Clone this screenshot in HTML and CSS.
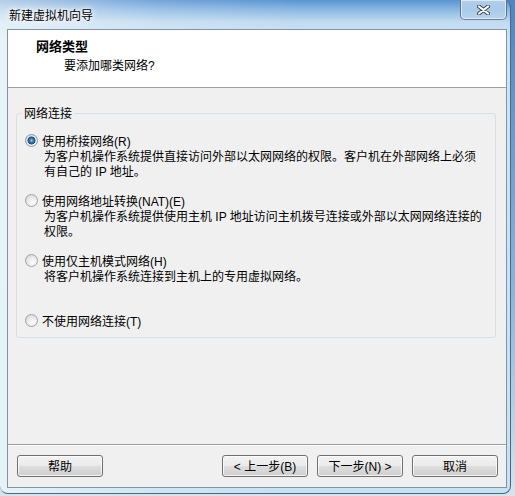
FILE: index.html
```html
<!DOCTYPE html>
<html lang="zh-CN">
<head>
<meta charset="utf-8">
<title>新建虚拟机向导</title>
<link rel="stylesheet" href="styles.css">
</head>
<body>
<div class="window">
  <div class="titlebar">
    <span class="title">新建虚拟机向导</span>
    <div class="close">
      <svg width="13" height="10" viewBox="0 0 13 10">
        <path d="M2 1.5 L11 8.5 M11 1.5 L2 8.5" stroke="#3c4652" stroke-width="4" stroke-linecap="round" fill="none"/>
        <path d="M2 1.5 L11 8.5 M11 1.5 L2 8.5" stroke="#ffffff" stroke-width="2.2" stroke-linecap="round" fill="none"/>
      </svg>
    </div>
  </div>
  <div class="client">
    <div class="header">
      <div class="h-title">网络类型</div>
      <div class="h-sub">要添加哪类网络?</div>
    </div>
    <div class="body">
      <fieldset class="group">
        <legend>网络连接</legend>
        <div class="option">
          <div class="opt-row"><span class="radio checked"></span><span class="label">使用桥接网络(R)</span></div>
          <div class="desc">为客户机操作系统提供直接访问外部以太网网络的权限。客户机在外部网络上必须<br>有自己的 IP 地址。</div>
        </div>
        <div class="option">
          <div class="opt-row"><span class="radio"></span><span class="label">使用网络地址转换(NAT)(E)</span></div>
          <div class="desc">为客户机操作系统提供使用主机 IP 地址访问主机拨号连接或外部以太网网络连接的<br>权限。</div>
        </div>
        <div class="option">
          <div class="opt-row"><span class="radio"></span><span class="label">使用仅主机模式网络(H)</span></div>
          <div class="desc">将客户机操作系统连接到主机上的专用虚拟网络。</div>
        </div>
        <div class="option last">
          <div class="opt-row"><span class="radio"></span><span class="label">不使用网络连接(T)</span></div>
        </div>
      </fieldset>
    </div>
    <div class="sep"></div>
    <div class="buttons">
      <button class="btn">帮助</button>
      <button class="btn back">&lt; 上一步(B)</button>
      <button class="btn">下一步(N) &gt;</button>
      <button class="btn">取消</button>
    </div>
  </div>
</div>
</body>
</html>
```
FILE: styles.css
```css
* { box-sizing: border-box; }
html, body { margin: 0; padding: 0; }
body {
  width: 515px;
  height: 496px;
  overflow: hidden;
  background: linear-gradient(180deg, #4f86bf 0%, #8fb6da 60%, #d9e3ea 100%);
  font-family: "Liberation Sans", "Noto Sans CJK SC", sans-serif;
  font-size: 12px;
  color: #000;
}
.window {
  width: 511px;
  height: 494px;
  display: flex;
  flex-direction: column;
  padding: 0 3px 5px 7px;
  border-right: 1px solid #4a6784;
  border-bottom: 1px solid #4a6784;
  border-radius: 0 8px 8px 8px;
  background:
    linear-gradient(90deg, rgba(255,255,255,0.55) 0px, rgba(255,255,255,0.15) 160px, rgba(255,255,255,0) 300px),
    linear-gradient(180deg, #5a94d1 0px, #8cb9e2 10px, #c1dbf0 22px, #cde4f3 40px, #c7e2f0 100%);
}
.titlebar {
  height: 29px;
  display: flex;
  align-items: flex-start;
  flex: none;
}
.title {
  margin: 8px 0 0 2px;
  line-height: 16px;
  text-shadow: 0 0 6px #fff, 0 0 3px #fff, 0 0 10px rgba(255,255,255,0.9);
}
.close {
  margin-left: auto;
  width: 47px;
  height: 20px;
  border: 1px solid rgba(50,70,100,0.65);
  border-top: none;
  border-radius: 0 0 5px 5px;
  background: linear-gradient(180deg, rgba(255,255,255,0.55) 0%, rgba(230,240,250,0.35) 50%, rgba(190,215,238,0.35) 100%);
  box-shadow: inset 0 0 0 1px rgba(255,255,255,0.55);
  display: flex;
  align-items: center;
  justify-content: center;
}
.client {
  width: 500px;
  height: 459px;
  border: 1px solid #7f94a9;
  background: #f0f0f0;
  display: flex;
  flex-direction: column;
}
.header {
  height: 58px;
  flex: none;
  background: #fff;
  border-bottom: 1px solid #a0a0a0;
  padding: 9px 0 0 28px;
}
.h-title {
  font-weight: bold;
  font-size: 13px;
  line-height: 16px;
}
.h-sub {
  margin: 3px 0 0 28px;
  line-height: 16px;
}
.body {
  flex: 1;
  padding: 17px 0 0 8px;
}
.group {
  margin: 0;
  width: 480px;
  min-width: 0;
  border: 1px solid #d5dfe5;
  border-radius: 3px;
  padding: 11px 0 9px 0;
}
.group legend {
  margin-left: 5px;
  padding: 2px 2px 0;
  line-height: 15px;
}
.option {
  height: 60px;
  padding-left: 8px;
}
.option.last { height: auto; }
.opt-row {
  display: flex;
  align-items: flex-start;
  gap: 4px;
  height: 15px;
}
.radio {
  flex: none;
  width: 13px;
  height: 13px;
  margin-top: 1px;
  border-radius: 50%;
  border: 1px solid #a3a3a3;
  background: radial-gradient(circle at 62% 68%, #fcfcfc 0%, #ececec 45%, #cdcdcd 100%);
}
.radio.checked {
  border-color: #8a98a6;
  background:
    radial-gradient(circle at 50% 50%, #9fd0f0 0px, #3f8cc3 1.5px, #245f8f 3px, #1b4a72 3.7px, rgba(27,74,114,0) 4.3px),
    radial-gradient(circle at 62% 68%, #fcfcfc 0%, #ececec 45%, #cdcdcd 100%);
}
.label {
  padding-top: 2px;
  line-height: 15px;
}
.desc {
  margin-left: 19px;
  padding-top: 2px;
  line-height: 15px;
}
.sep {
  flex: none;
  height: 2px;
  border-top: 1px solid #a0a0a0;
  border-bottom: 1px solid #fff;
}
.buttons {
  flex: none;
  height: 41px;
  display: flex;
  align-items: flex-start;
  gap: 9px;
  padding: 9px 8px 0 9px;
}
.btn {
  width: 86px;
  height: 22px;
  padding: 2px 0 0;
  border: 1px solid #707070;
  border-radius: 3px;
  background: linear-gradient(180deg, #f2f2f2 0%, #ebebeb 48%, #dddddd 52%, #cfcfcf 100%);
  box-shadow: inset 0 0 0 1px rgba(255,255,255,0.75);
  font-family: inherit;
  font-size: 12px;
  line-height: 16px;
  color: #000;
}
.btn.back { margin-left: auto; }
```
